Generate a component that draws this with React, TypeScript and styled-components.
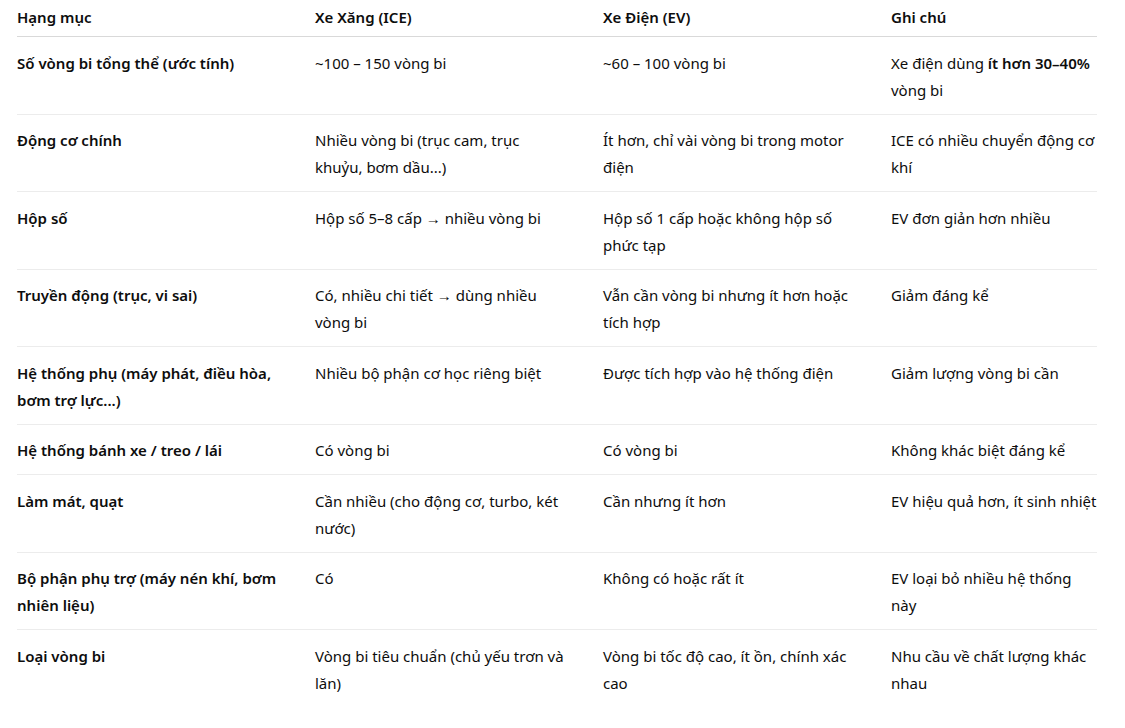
import styled, { createGlobalStyle } from "styled-components";

const GlobalStyle = createGlobalStyle`
  body {
    margin: 0;
    background: #ffffff;
    font-family: "Noto Sans", "Open Sans", Arial, sans-serif;
    color: #0d0d0d;
  }
`;

const Page = styled.div`
  padding: 0 28px 0 17px;
`;

const Table = styled.table`
  width: 1080px;
  border-collapse: collapse;
  table-layout: fixed;
  font-size: 15px;
  line-height: 27px;
`;

const HeadCell = styled.th`
  text-align: left;
  font-weight: 600;
  padding: 4px 16px 5px 0;
  border-bottom: 1px solid #d9d9d9;
  vertical-align: top;
`;

const Row = styled.tr<{ $last?: boolean }>`
  border-bottom: ${(p) => (p.$last ? "none" : "1px solid #ececec")};
`;

const Cell = styled.td<{ $strong?: boolean }>`
  padding: 12.5px 36px 10px 0;
  vertical-align: top;
  font-weight: ${(p) => (p.$strong ? 600 : 400)};

  &:last-child {
    padding-right: 0;
  }
`;

const Em = styled.strong`
  font-weight: 600;
`;

type RowData = [string, string, string, React.ReactNode];

const rows: RowData[] = [
  [
    "Số vòng bi tổng thể (ước tính)",
    "~100 – 150 vòng bi",
    "~60 – 100 vòng bi",
    <>
      Xe điện dùng <Em>ít hơn 30–40%</Em> vòng bi
    </>,
  ],
  [
    "Động cơ chính",
    "Nhiều vòng bi (trục cam, trục khuỷu, bơm dầu...)",
    "Ít hơn, chỉ vài vòng bi trong motor điện",
    "ICE có nhiều chuyển động cơ khí",
  ],
  [
    "Hộp số",
    "Hộp số 5–8 cấp → nhiều vòng bi",
    "Hộp số 1 cấp hoặc không hộp số phức tạp",
    "EV đơn giản hơn nhiều",
  ],
  [
    "Truyền động (trục, vi sai)",
    "Có, nhiều chi tiết → dùng nhiều vòng bi",
    "Vẫn cần vòng bi nhưng ít hơn hoặc tích hợp",
    "Giảm đáng kể",
  ],
  [
    "Hệ thống phụ (máy phát, điều hòa, bơm trợ lực...)",
    "Nhiều bộ phận cơ học riêng biệt",
    "Được tích hợp vào hệ thống điện",
    "Giảm lượng vòng bi cần",
  ],
  [
    "Hệ thống bánh xe / treo / lái",
    "Có vòng bi",
    "Có vòng bi",
    "Không khác biệt đáng kể",
  ],
  [
    "Làm mát, quạt",
    "Cần nhiều (cho động cơ, turbo, két nước)",
    "Cần nhưng ít hơn",
    "EV hiệu quả hơn, ít sinh nhiệt",
  ],
  [
    "Bộ phận phụ trợ (máy nén khí, bơm nhiên liệu)",
    "Có",
    "Không có hoặc rất ít",
    "EV loại bỏ nhiều hệ thống này",
  ],
  [
    "Loại vòng bi",
    "Vòng bi tiêu chuẩn (chủ yếu trơn và lăn)",
    "Vòng bi tốc độ cao, ít ồn, chính xác cao",
    "Nhu cầu về chất lượng khác nhau",
  ],
];

export default function App() {
  return (
    <>
      <GlobalStyle />
      <Page>
        <Table>
          <colgroup>
            <col style={{ width: 298 }} />
            <col style={{ width: 288 }} />
            <col style={{ width: 288 }} />
            <col />
          </colgroup>
          <thead>
            <tr>
              <HeadCell>Hạng mục</HeadCell>
              <HeadCell>Xe Xăng (ICE)</HeadCell>
              <HeadCell>Xe Điện (EV)</HeadCell>
              <HeadCell>Ghi chú</HeadCell>
            </tr>
          </thead>
          <tbody>
            {rows.map((r, i) => (
              <Row key={i} $last={i === rows.length - 1}>
                <Cell $strong>{r[0]}</Cell>
                <Cell>{r[1]}</Cell>
                <Cell>{r[2]}</Cell>
                <Cell>{r[3]}</Cell>
              </Row>
            ))}
          </tbody>
        </Table>
      </Page>
    </>
  );
}
